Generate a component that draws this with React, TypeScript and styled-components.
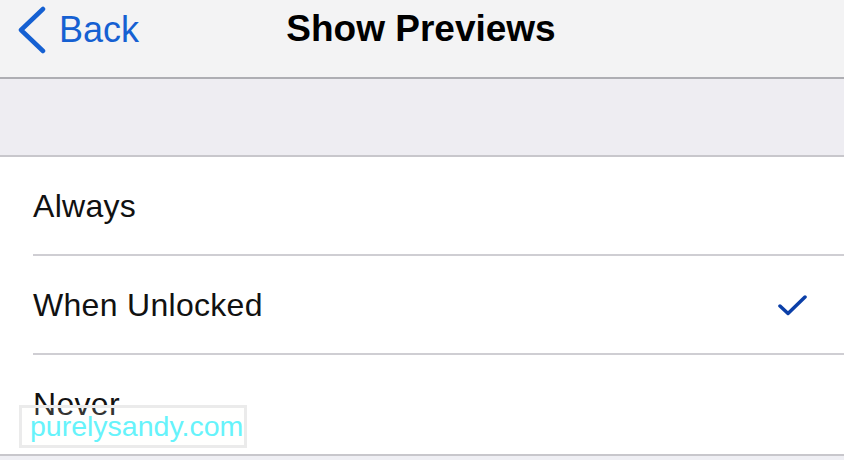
import styled, { createGlobalStyle } from 'styled-components';

const GlobalStyle = createGlobalStyle`
	html, body {
		margin: 0;
		padding: 0;
		background: #efeff4;
	}
	body {
		font-family: "Liberation Sans", Arial, sans-serif;
		-webkit-font-smoothing: antialiased;
	}
`

const Screen = styled.div`
	position: relative;
	width: 844px;
	height: 460px;
	overflow: hidden;
	background: #efeff4;
	display: flex;
	flex-direction: column;
`

const NavBar = styled.div`
	height: 79px;
	box-sizing: border-box;
	background: #f3f3f4;
	border-bottom: 2px solid #aeaeb3;
	display: grid;
	grid-template-columns: 1fr auto 1fr;
	align-items: start;
	padding-top: 10px;
`

const BackButton = styled.button`
	display: flex;
	align-items: center;
	gap: 11px;
	padding: 0 0 0 18px;
	margin-top: -4px;
	border: none;
	background: none;
	color: #1560d2;
	font-family: "Liberation Sans", Arial, sans-serif;
	font-size: 36px;
	line-height: 48px;
	cursor: pointer;
	justify-self: start;
`

const Title = styled.div`
	font-size: 37px;
	line-height: 37px;
	font-weight: bold;
	color: #000;
	margin-left: -2px;
`

const SectionGap = styled.div`
	height: 78px;
	background: #eeedf2;
	border-bottom: 2px solid #c8c7cc;
	box-sizing: border-box;
`

const List = styled.div`
	background: #fff;
	border-bottom: 2px solid #c8c7cc;
`

const Row = styled.div<{ $last?: boolean }>`
	position: relative;
	height: 99px;
	box-sizing: border-box;
	display: flex;
	align-items: center;
	justify-content: space-between;
	padding: 0 36px 0 33px;
	font-size: 32px;
	letter-spacing: 0.3px;
	color: #111;
	&::after {
		content: '';
		display: ${({ $last }) => ($last ? 'none' : 'block')};
		position: absolute;
		left: 33px;
		right: 0;
		bottom: 0;
		height: 2px;
		background: #cfced3;
	}
`

// watermark stamped over the bottom-left of the screenshot
const Watermark = styled.div`
	position: absolute;
	left: 19px;
	top: 405px;
	width: 228px;
	height: 43px;
	box-sizing: border-box;
	border: 3px solid #ebebeb;
	background: rgba(255, 255, 250, 0.15);
	color: #66f3fb;
	font-size: 28.5px;
	line-height: 36px;
	padding-left: 8px;
`

const Chevron = () => (
	<svg width="30" height="48" viewBox="0 0 30 48">
		<path d="M25 3 L3 24 L25 45" fill="none" stroke="#1560d2" strokeWidth="4.5" strokeLinecap="round" strokeLinejoin="round" />
	</svg>
)

const Check = () => (
	<svg width="30" height="22" viewBox="0 0 30 22">
		<path d="M2 11 L10 18.5 L27 2" fill="none" stroke="#0b3fa8" strokeWidth="3.5" strokeLinecap="round" strokeLinejoin="round" />
	</svg>
)

const options = [
	{ label: "Always", selected: false },
	{ label: "When Unlocked", selected: true },
	{ label: "Never", selected: false },
]

const App = () => {
	return (
		<Screen>
			<GlobalStyle />
			<NavBar>
				<BackButton>
					<Chevron />
					Back
				</BackButton>
				<Title>Show Previews</Title>
				<div />
			</NavBar>
			<SectionGap />
			<List>
				{options.map((o, i) => (
					<Row key={o.label} $last={i === options.length - 1}>
						<span>{o.label}</span>
						{o.selected && <Check />}
					</Row>
				))}
			</List>
			<Watermark>purelysandy.com</Watermark>
		</Screen>
	)
}

export default App
